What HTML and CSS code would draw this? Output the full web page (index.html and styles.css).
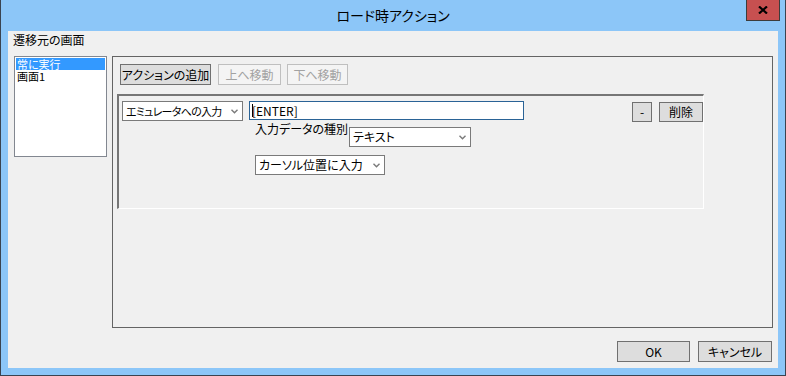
FILE: index.html
```html
<!DOCTYPE html>
<html lang="ja">
<head>
<meta charset="UTF-8">
<meta name="viewport" content="width=device-width, initial-scale=1.0">
<title>ロード時アクション</title>
<link rel="stylesheet" href="styles.css">
</head>
<body>

<div class="window">
    <div class="titlebar">
        <span></span>
        <span class="title">ロード時アクション</span>
        <button class="close" title="閉じる">
            <svg width="10" height="8" viewBox="0 0 10 8">
                <path d="M1 0.5 L9 7.5 M9 0.5 L1 7.5" stroke="#000" stroke-width="2.2" fill="none"/>
            </svg>
        </button>
    </div>

    <div class="client">
        <div class="caption">遷移元の画面</div>

        <div class="main">
            <ul class="listbox">
                <li class="selected">常に実行</li>
                <li>画面1</li>
            </ul>

            <div class="panel">
                <div class="toolbar">
                    <button class="btn btn-add">アクションの追加</button>
                    <button class="btn btn-up" disabled>上へ移動</button>
                    <button class="btn btn-down" disabled>下へ移動</button>
                </div>

                <div class="actions">
                    <div class="action-row">
                        <div class="combo combo-type">
                            <span>エミュレータへの入力</span>
                            <svg class="chev" width="7" height="5" viewBox="0 0 7 5"><path d="M0.5 0.8 L3.5 3.8 L6.5 0.8" stroke="#7a7a7a" stroke-width="1.4" fill="none"/></svg>
                        </div>

                        <div class="action-body">
                            <div class="textbox"><span class="caret"></span>[ENTER]</div>
                            <div class="field-row">
                                <span class="field-label">入力データの種別</span>
                                <div class="combo combo-kind">
                                    <span>テキスト</span>
                                    <svg class="chev" width="7" height="5" viewBox="0 0 7 5"><path d="M0.5 0.8 L3.5 3.8 L6.5 0.8" stroke="#7a7a7a" stroke-width="1.4" fill="none"/></svg>
                                </div>
                            </div>
                            <div class="combo combo-pos">
                                <span>カーソル位置に入力</span>
                                <svg class="chev" width="7" height="5" viewBox="0 0 7 5"><path d="M0.5 0.8 L3.5 3.8 L6.5 0.8" stroke="#7a7a7a" stroke-width="1.4" fill="none"/></svg>
                            </div>
                        </div>

                        <div class="row-buttons">
                            <button class="btn btn-minus">-</button>
                            <button class="btn btn-delete">削除</button>
                        </div>
                    </div>
                </div>
            </div>
        </div>

        <div class="footer">
            <button class="btn btn-ok">OK</button>
            <button class="btn btn-cancel">キャンセル</button>
        </div>
    </div>
</div>

</body>
</html>
```

FILE: styles.css
```css
body {
    margin: 0;
    padding: 0;
    background-color: #f0f0f0;
    font-family: "Noto Sans CJK JP", sans-serif;
    font-size: 12px;
    font-feature-settings: "palt";
    color: #000;
}

.window {
    width: 786px;
    height: 376px;
    box-sizing: border-box;
    background-color: #8cc6f8;
    border: 1px solid #3a4350;
    border-top: none;
    padding: 0 7px 7px 7px;
    display: flex;
    flex-direction: column;
}

.titlebar {
    height: 31px;
    display: grid;
    grid-template-columns: 1fr auto 1fr;
}

.title {
    font-size: 14px;
    line-height: 31px;
    color: #000;
}

.close {
    justify-self: end;
    align-self: start;
    margin-right: -2px;
    width: 34px;
    height: 21px;
    padding: 0;
    background-color: #c75050;
    border: 1px solid #3c3c3c;
    border-top: none;
    display: flex;
    align-items: center;
    justify-content: center;
}

.client {
    flex: 1;
    background-color: #f0f0f0;
    padding: 0 5px 0 6px;
    display: flex;
    flex-direction: column;
}

.caption {
    margin-left: -1px;
    padding-top: 1px;
    line-height: 16px;
    height: 17px;
}

.main {
    margin-top: 7px;
    height: 272px;
    display: flex;
    gap: 5px;
}

.listbox {
    list-style-type: none;
    margin: 0;
    padding: 1px;
    width: 93px;
    height: 101px;
    box-sizing: border-box;
    background-color: #fff;
    border: 1px solid #828790;
}

.listbox li {
    height: 12px;
    line-height: 12px;
    font-size: 11px;
    padding-left: 1px;
    white-space: nowrap;
}

.listbox li.selected {
    background-color: #3399ff;
    color: #fff;
}

.panel {
    width: 661px;
    box-sizing: border-box;
    border: 1px solid #646464;
    padding: 7px 0 0 4px;
}

.toolbar {
    display: flex;
    gap: 6px;
    margin-left: 3px;
}

.btn {
    height: 21px;
    padding: 0;
    box-sizing: border-box;
    font-family: "Noto Sans CJK JP", sans-serif;
    font-size: 12px;
    font-feature-settings: "palt";
    line-height: 18px;
    color: #000;
    background-color: #dddddd;
    border: 1px solid #707070;
}

.btn:disabled {
    background-color: #f4f4f4;
    border-color: #bfbfbf;
    color: #a2a2a2;
}

.btn-add {
    width: 91px;
    margin-right: 1px;
}

.btn-up {
    width: 63px;
}

.btn-down {
    width: 61px;
}

.actions {
    margin-top: 9px;
    width: 587px;
    height: 115px;
    box-sizing: border-box;
    border-top: 2px solid #767676;
    border-left: 2px solid #767676;
    border-right: 1px solid #fff;
    border-bottom: 1px solid #fff;
    padding: 5px 0 0 3px;
}

.action-row {
    display: flex;
    align-items: flex-start;
}

.combo {
    height: 20px;
    box-sizing: border-box;
    background-color: #fff;
    border: 1px solid #7a7a7a;
    padding: 0 4px 0 3px;
    display: flex;
    align-items: center;
    justify-content: space-between;
    line-height: 18px;
    white-space: nowrap;
}

.combo-type {
    width: 121px;
    font-size: 11px;
    letter-spacing: -0.7px;
}

.combo-kind {
    width: 122px;
}

.combo-pos {
    width: 130px;
    margin-top: 8px;
    margin-left: 6px;
}

.chev {
    flex-shrink: 0;
}

.action-body {
    margin-left: 6px;
    display: flex;
    flex-direction: column;
}

.textbox {
    width: 275px;
    height: 19px;
    box-sizing: border-box;
    background-color: #fff;
    border: 1px solid #2a6396;
    padding-left: 2px;
    line-height: 17px;
    display: flex;
    align-items: center;
}

.caret {
    width: 1px;
    height: 13px;
    background-color: #000;
    margin-right: -1px;
}

.field-row {
    margin-top: 7px;
    margin-left: 6px;
    display: flex;
    align-items: flex-start;
}

.field-label {
    width: 94px;
    margin-top: -5px;
    line-height: 14px;
    white-space: nowrap;
}

.row-buttons {
    margin-left: auto;
    margin-top: 1px;
    display: flex;
    gap: 7px;
}

.btn-minus {
    width: 20px;
    height: 20px;
}

.btn-delete {
    width: 44px;
    height: 20px;
}

.footer {
    margin-top: 13px;
    padding-right: 1px;
    display: flex;
    justify-content: flex-end;
    gap: 8px;
}

.btn-ok {
    width: 73px;
}

.btn-cancel {
    width: 74px;
}
```
